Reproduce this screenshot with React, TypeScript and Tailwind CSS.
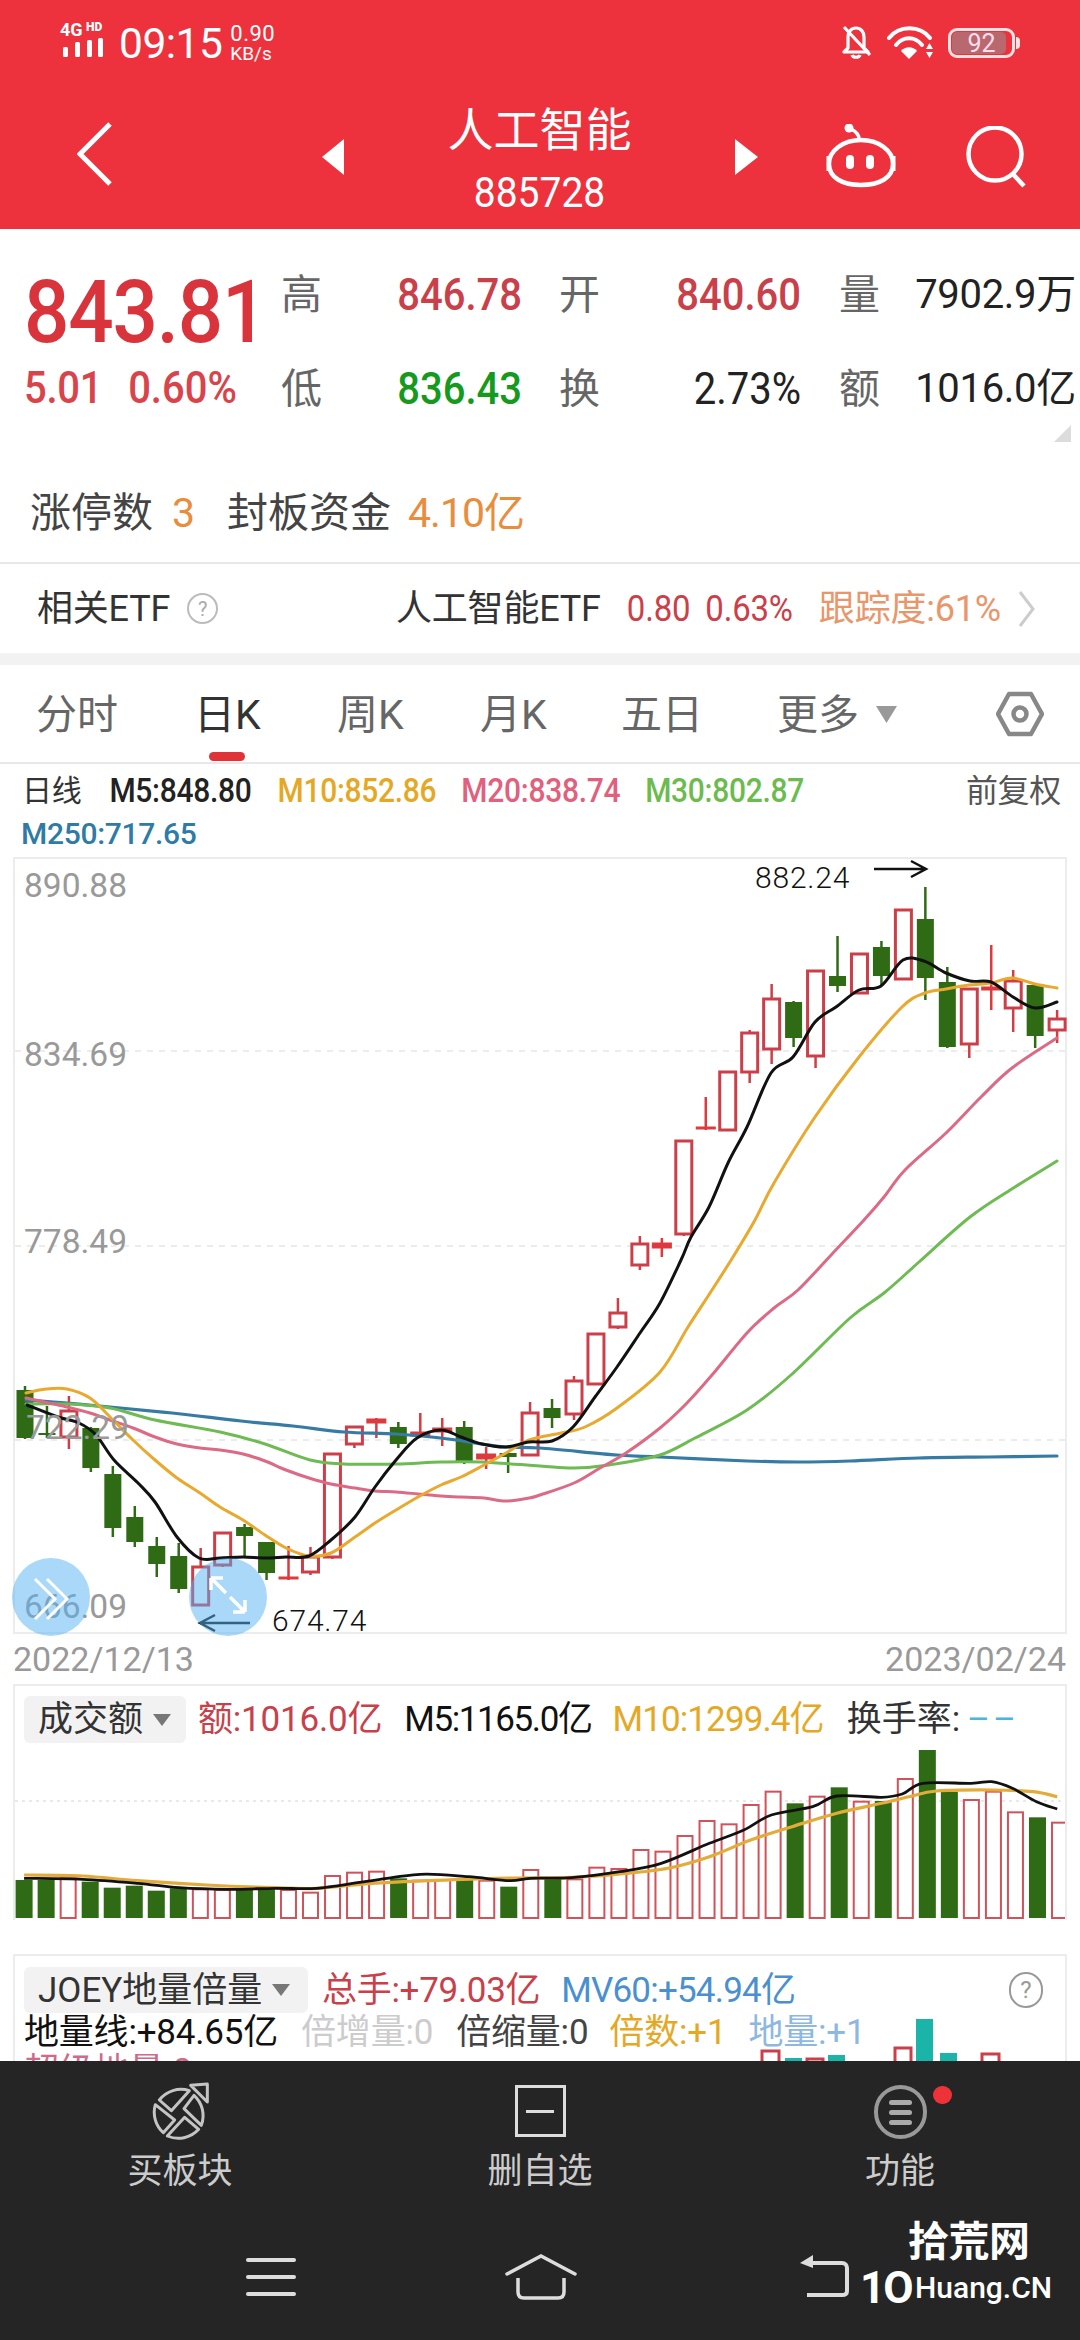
import React from "react";

type C = [number, number, number, number, number];
// kind (0 green, 1 hollow red, 2 solid red), bodyTop, bodyBottom, wickTop, wickBottom
const candles: C[] = [
  [0,1390,1438,1386,1439],[0,1433,1435,1406,1438],[1,1411,1437,1396,1449],[0,1428,1468,1427,1472],
  [0,1474,1528,1466,1537],[0,1517,1542,1506,1547],[0,1546,1564,1537,1577],[0,1556,1589,1543,1593],
  [1,1567,1605,1548,1605],[1,1533,1565,1533,1567],[0,1527,1536,1524,1557],[0,1542,1573,1542,1580],
  [2,1577,1579,1546,1580],[1,1557,1572,1547,1575],[1,1454,1557,1453,1559],[1,1427,1444,1427,1448],
  [2,1419,1423,1418,1438],[0,1427,1444,1422,1448],[2,1432,1436,1413,1437],[2,1428,1432,1418,1446],
  [0,1427,1463,1421,1464],[2,1454,1459,1447,1469],[0,1453,1457,1452,1473],[1,1413,1455,1402,1456],
  [0,1408,1418,1399,1428],[1,1381,1414,1376,1420],[1,1334,1384,1334,1385],[1,1313,1327,1298,1329],
  [1,1244,1265,1236,1270],[2,1243,1248,1238,1257],[1,1141,1234,1141,1236],[2,1127,1129,1097,1130],
  [1,1072,1130,1072,1131],[1,1033,1072,1030,1083],[1,999,1049,984,1064],[0,1002,1038,1001,1047],
  [1,971,1056,971,1068],[0,976,986,936,992],[1,954,993,954,994],[0,947,976,941,985],
  [1,910,979,910,980],[0,919,978,887,1000],[0,982,1047,967,1048],[1,989,1044,989,1058],
  [2,987,990,945,1010],[1,981,1008,970,1032],[0,985,1036,985,1048],[1,1019,1030,1010,1043],
];

const m5 = "27,1405 58,1417 79,1423 96,1435 114,1460 138,1483 155,1502 177,1537 199,1558 220,1558 243,1557 265,1558 286,1557 309,1556 331,1540 355,1517 375,1487 396,1460 417,1438 441,1430 461,1437 482,1444 506,1447 529,1442 552,1441 573,1427 595,1397 617,1367 640,1333 660,1303 681,1260 691,1237 709,1207 728,1163 747,1127 771,1073 793,1057 815,1022 836,1007 859,990 881,986 903,960 924,961 946,973 970,981 991,982 1013,997 1035,1008 1057,1002";
const m10 = "26,1393 46,1389 67,1389 90,1398 110,1417 133,1440 155,1460 177,1478 200,1493 220,1507 243,1520 265,1535 286,1548 309,1556 331,1553 355,1537 375,1523 396,1510 418,1497 441,1485 461,1477 484,1465 506,1453 529,1440 561,1433 585,1427 617,1408 660,1372 688,1327 712,1290 733,1257 755,1220 774,1183 815,1117 859,1057 902,1007 925,993 946,989 969,985 991,983 1012,978 1035,984 1057,988";
const m20 = "26,1398 67,1407 90,1413 110,1420 133,1428 155,1437 177,1444 200,1448 220,1450 243,1454 265,1461 286,1470 309,1478 331,1484 355,1488 375,1491 396,1492 418,1494 441,1496 461,1497 484,1498 506,1501 529,1498 540,1495 574,1483 600,1468 626,1453 660,1428 685,1405 712,1375 747,1333 774,1308 798,1290 833,1253 864,1220 884,1197 905,1170 946,1133 981,1097 1012,1068 1057,1038";
const m30 = "26,1404 67,1404 110,1408 155,1420 220,1432 265,1444 310,1460 344,1464 396,1464 441,1462 482,1462 540,1466 574,1468 609,1465 660,1455 695,1438 747,1410 791,1375 850,1318 884,1293 919,1262 970,1217 1015,1187 1057,1161";
const m250 = "26,1400 67,1403 110,1407 172,1413 241,1421 293,1426 344,1432 396,1434 441,1438 482,1444 506,1447 540,1448 617,1455 660,1457 747,1461 798,1462 850,1461 919,1458 988,1457 1057,1456";

// Catmull-Rom smoothing of a point list into a cubic path
function smooth(pts: string) {
  const p = pts.split(" ").map((s) => s.split(",").map(Number));
  let d = `M${p[0][0]} ${p[0][1]}`;
  for (let i = 0; i < p.length - 1; i++) {
    const a = p[Math.max(0, i - 1)], b = p[i], c = p[i + 1], e = p[Math.min(p.length - 1, i + 2)];
    const c1x = b[0] + (c[0] - a[0]) / 6, c1y = b[1] + (c[1] - a[1]) / 6;
    const c2x = c[0] - (e[0] - b[0]) / 6, c2y = c[1] - (e[1] - b[1]) / 6;
    d += `C${c1x.toFixed(1)} ${c1y.toFixed(1)} ${c2x.toFixed(1)} ${c2y.toFixed(1)} ${c[0]} ${c[1]}`;
  }
  return d;
}

const vol: [number, number][] = [
  [0,720],[0,720],[1,715],[0,725],[0,743],[0,737],[0,752],[0,745],[1,748],[1,750],[0,745],[0,748],[1,750],[1,758],[1,708],[1,698],
  [1,695],[0,715],[1,722],[1,720],[0,720],[1,722],[0,740],[1,690],[0,715],[1,718],[1,683],[1,687],[1,630],[1,635],[1,588],[1,543],
  [1,553],[1,495],[1,455],[0,490],[1,470],[0,442],[1,485],[0,483],[1,417],[0,327],[0,455],[1,480],[1,455],[1,517],[0,532],[1,548],
];
const volBlack: [number, number][] = [[35,715],[120,718],[200,730],[260,743],[330,748],[400,745],[460,745],[530,725],[610,703],[680,710],[740,722],[770,715],[830,713],[900,695],[960,670],[1030,610],[1080,570],[1120,525],[1180,500],[1215,468],[1280,472],[1310,462],[1340,430],[1410,430],[1440,425],[1470,445],[1505,485],[1535,507]];
const volOrange: [number, number][] = [[35,705],[120,708],[200,722],[300,735],[400,743],[460,745],[540,730],[620,722],[720,715],[830,712],[900,702],[970,685],[1030,650],[1090,600],[1150,560],[1215,520],[1280,490],[1320,470],[1360,453],[1440,450],[1500,455],[1535,470]];
const vx = (x: number) => x / 1.452;
const vy = (y: number) => 1640 + y / 3;
const toPts = (a: [number, number][]) => a.map(([x, y]) => `${vx(x).toFixed(1)},${vy(y).toFixed(1)}`).join(" ");

const RED = "#cc3f49";
const GREEN = "#2f6b14";

function KChart() {
  return (
    <svg viewBox="15 859 1050 773" className="block w-full h-full overflow-visible">
      {[1051, 1246, 1440].map((y) => (
        <line key={y} x1="15" x2="1065" y1={y} y2={y} stroke="#e6e6e6" strokeWidth="1.5" strokeDasharray="6 6" />
      ))}
      {candles.map(([k, t, b, wt, wb], i) => {
        const x = 25 + 21.96 * i;
        const color = k === 0 ? GREEN : k === 1 ? RED : "#dc3a3e";
        return (
          <g key={i}>
            <line x1={x} x2={x} y1={wt} y2={wb} stroke={color} strokeWidth="2.5" />
            {k === 0 ? (
              <rect x={x - 8.5} y={t} width="17" height={b - t} fill={color} />
            ) : k === 1 ? (
              <rect x={x - 8} y={t} width="16" height={b - t} fill="#fff" stroke={color} strokeWidth="3" />
            ) : (
              <rect x={x - 9.5} y={t} width="19" height={b - t} fill={color} stroke={color} strokeWidth="1" />
            )}
          </g>
        );
      })}
      <g fill="none" strokeLinejoin="round" strokeLinecap="round">
        <path d={smooth(m250)} stroke="#367ba3" strokeWidth="3.2" />
        <path d={smooth(m30)} stroke="#6dbb52" strokeWidth="3" />
        <path d={smooth(m20)} stroke="#dd6a84" strokeWidth="3" />
        <path d={smooth(m10)} stroke="#e8a92e" strokeWidth="3" />
        <path d={smooth(m5)} stroke="#111" strokeWidth="3" />
      </g>
      <g fill="#999" fontSize="33.5" fontFamily="Roboto, sans-serif">
        <text x="24" y="897">890.88</text>
        <text x="24" y="1066">834.69</text>
        <text x="24" y="1253">778.49</text>
        <text x="26" y="1439">722.29</text>
        <text x="24" y="1618">666.09</text>
      </g>
      <g fill="#111" fontSize="30" fontFamily="Roboto, sans-serif" fontWeight="300">
        <text x="755" y="888" letterSpacing="0.8">882.24</text>
        <text x="272" y="1631" letterSpacing="0.8">674.74</text>
      </g>
      <g fill="none" stroke="#111" strokeWidth="2.5">
        <path d="M874 869H925M911 861L926 869L911 877" />
        <path d="M250 1623H200M215 1615L200 1623L215 1631" />
      </g>
    </svg>
  );
}

function VolChart() {
  return (
    <svg viewBox="15 1750 1050 170" className="block w-full h-[170px]">
      <line x1="15" x2="1065" y1="1801" y2="1801" stroke="#e2e2e2" strokeWidth="1.5" strokeDasharray="3 4" />
      {vol.map(([k, t], i) => {
        const x = vx(35) + 22.03 * i;
        const top = vy(t);
        return k === 0 ? (
          <rect key={i} x={x - 8.5} y={top} width="17" height={1918 - top} fill={GREEN} />
        ) : (
          <rect key={i} x={x - 7.5} y={top} width="15" height={1918 - top} fill="#fff" stroke="#d0525a" strokeWidth="2" />
        );
      })}
      <path d={smooth(toPts(volOrange))} fill="none" stroke="#e3ac3a" strokeWidth="3.2" />
      <path d={smooth(toPts(volBlack))} fill="none" stroke="#111" strokeWidth="2.8" />
    </svg>
  );
}

const Tri = () => (
  <svg width="18" height="12" viewBox="0 0 18 12" className="shrink-0"><path d="M0 0H18L9 12Z" fill="#777" /></svg>
);

export default function App() {
  return (
    <div className="relative w-[1080px] h-[2340px] overflow-hidden bg-white flex flex-col font-[Roboto,'Noto_Sans_CJK_SC',sans-serif] text-[#333]">
      {/* Header */}
      <header className="h-[229px] shrink-0 bg-[#ee323d] text-white flex flex-col">
        <div className="h-[110px] flex items-start pt-[22px] pl-[60px] pr-[60px]">
          <svg width="48" height="36" viewBox="0 0 48 36" className="shrink-0 overflow-visible">
            <text x="0" y="14" fontSize="18" fontWeight="700" fill="#fff" fontFamily="Roboto, sans-serif">4G</text>
            <text x="26" y="9" fontSize="12" fontWeight="900" fill="#fff" fontFamily="Roboto, sans-serif">HD</text>
            <g fill="#fff">
              <rect x="3" y="25" width="5" height="10" rx="1.5" /><rect x="15" y="20" width="5" height="15" rx="1.5" />
              <rect x="27" y="18" width="5" height="17" rx="1.5" /><rect x="38" y="16" width="5" height="19" rx="1.5" />
            </g>
          </svg>
          <span className="ml-[11px] text-[42.5px] leading-[44px] tracking-[-0.5px]">09:15</span>
          <div className="ml-[8px] flex flex-col text-[22px] leading-[20px] pt-[2px]">
            <span className="tracking-[0.5px]">0.90</span>
            <span className="text-[19px]">KB/s</span>
          </div>
          <div className="ml-auto flex items-start pt-[3px]">
            <svg width="30" height="34" viewBox="0 0 30 34" fill="none" stroke="#fff" strokeWidth="3.2" className="shrink-0">
              <path d="M7 23V12C7 7 10 3 15 3S23 7 23 12V23L27 27H3Z" strokeLinejoin="round" />
              <path d="M11 30C12 33 18 33 19 30" />
              <path d="M3 2L29 30" />
            </svg>
            <svg width="47" height="34" viewBox="0 0 47 34" className="ml-[16px] shrink-0">
              <g fill="none" stroke="#fff" strokeWidth="4" strokeLinecap="round">
                <path d="M2 13C12 0 33 0 43 13" /><path d="M9 20C16 11 28 11 35 20" />
              </g>
              <path d="M14 26C18 21 26 21 30 26L22 34Z" fill="#fff" />
              <path d="M39 24H46L42.5 18ZM39 27H46L42.5 33Z" fill="#fff" />
            </svg>
            <div className="ml-[14px] mt-[3px] flex items-center shrink-0">
              <div className="relative w-[67px] h-[30px] rounded-[9px] border-[3px] border-[#fbe3e3] overflow-hidden flex items-center justify-center">
                <div className="absolute left-[1px] top-[1px] bottom-[1px] w-[54px] rounded-[5px] bg-[#b9686e]" />
                <span className="relative text-[25px] leading-none text-[#fde]">92</span>
              </div>
              <div className="w-[4px] h-[12px] bg-[#fbe3e3] rounded-r-sm ml-[1px]" />
            </div>
          </div>
        </div>
        <div className="h-[119px] flex items-start pl-[77px]">
          <svg width="35" height="64" viewBox="0 0 35 64" className="mt-[12px] shrink-0" fill="none" stroke="#fff" strokeWidth="5">
            <path d="M33 2L3 32L33 62" />
          </svg>
          <svg width="22" height="36" viewBox="0 0 22 36" className="ml-[210px] mt-[29px] shrink-0"><path d="M22 0V36L0 18Z" fill="#fff" /></svg>
          <div className="w-[391px] flex flex-col items-center">
            <span className="text-[46px] leading-[46px] mt-[-3px]">人工智能</span>
            <span className="text-[39px] leading-[40px] mt-[20px] scale-y-[1.1]">885728</span>
          </div>
          <svg width="23" height="36" viewBox="0 0 23 36" className="mt-[29px] shrink-0"><path d="M0 0V36L23 18Z" fill="#fff" /></svg>
          <svg width="72" height="64" viewBox="0 0 72 64" className="ml-[67px] mt-[14px] shrink-0" fill="none" stroke="#fff" strokeWidth="4.5">
            <path d="M36 16C53 16 68 26 68 40C68 54 54 61 36 61C18 61 4 54 4 40C4 26 19 16 36 16Z" />
            <path d="M3 32V47M69 32V47" strokeWidth="3" />
            <path d="M34 15C34 10 30 7 26 5" strokeWidth="3.5" />
            <circle cx="24" cy="4" r="4.5" fill="#fff" stroke="none" />
            <rect x="21" y="31" width="8" height="14" rx="4" fill="#fff" stroke="none" />
            <rect x="41" y="31" width="8" height="14" rx="4" fill="#fff" stroke="none" />
          </svg>
          <svg width="62" height="62" viewBox="0 0 62 62" className="ml-[68px] mt-[16px] shrink-0" fill="none" stroke="#fff" strokeWidth="4.5">
            <circle cx="30" cy="28" r="26.5" /><path d="M47 47L59 60" />
          </svg>
        </div>
      </header>

      {/* Quote */}
      <section className="relative h-[236px] shrink-0 flex">
        <div className="w-[281px] shrink-0 pl-[24px] pt-[44px] flex flex-col">
          <span className="h-[80px] flex items-center text-[80px] leading-none font-medium text-[#d9333b] tracking-[-1.2px] scale-y-[1.08] origin-center">843.81</span>
          <div className="h-[72px] flex items-center text-[40px] text-[#d9434a] leading-none">
            <span className="font-medium tracking-[-0.3px] scale-y-[1.1]">5.01</span>
            <span className="ml-[26px] font-medium scale-y-[1.1]">0.60%</span>
          </div>
        </div>
        <div className="pt-[19px] grid grid-cols-[41px_200px_78px_201px_79px_196px] grid-rows-[94px_94px] items-center h-fit">
          <span className="text-[41px] leading-none text-[#666]">高</span>
          <span className="text-right text-[40px] leading-none font-medium text-[#c9404a] scale-y-[1.12]">846.78</span>
          <span className="text-right text-[41px] leading-none text-[#666]">开</span>
          <span className="text-right text-[40px] leading-none font-medium text-[#c9404a] scale-y-[1.12]">840.60</span>
          <span className="text-right text-[41px] leading-none text-[#666]">量</span>
          <span className="text-right text-[40px] leading-none text-[#222] tracking-[-0.3px]">7902.9万</span>
          <span className="text-[41px] leading-none text-[#666]">低</span>
          <span className="text-right text-[40px] leading-none font-medium text-[#159a1e] scale-y-[1.12]">836.43</span>
          <span className="text-right text-[41px] leading-none text-[#666]">换</span>
          <span className="text-right text-[40px] leading-none text-[#222] scale-y-[1.12]">2.73%</span>
          <span className="text-right text-[41px] leading-none text-[#666]">额</span>
          <span className="text-right text-[40px] leading-none text-[#222] tracking-[-0.3px]">1016.0亿</span>
        </div>
        <svg width="17" height="17" viewBox="0 0 17 17" className="absolute left-[1054px] top-[196px]"><path d="M17 0V17H0Z" fill="#dcdcdc" /></svg>
      </section>

      <section className="h-[99px] shrink-0 border-b-2 border-[#e8e8e8] flex items-center pl-[30px] text-[41px] leading-none text-[#444]">
        <span>涨停数</span>
        <span className="ml-[19px] text-[#e98c3c]">3</span>
        <span className="ml-[32px]">封板资金</span>
        <span className="ml-[17px] text-[#e98c3c] tracking-[-1px]">4.10亿</span>
      </section>

      <section className="h-[89px] shrink-0 flex items-center pl-[37px] pr-[44px] text-[36px] leading-none text-[#333] tracking-[-0.2px]">
        <span>相关ETF</span>
        <span className="ml-[17px] w-[31px] h-[31px] rounded-full border-2 border-[#bbb] text-[#aaa] text-[20px] flex items-center justify-center">?</span>
        <span className="ml-auto">人工智能ETF</span>
        <span className="ml-[26px] text-[#cc3f49] text-[33px] scale-y-[1.1]">0.80</span>
        <span className="ml-[15px] text-[#cc3f49] text-[33px] scale-y-[1.1]">0.63%</span>
        <span className="ml-[26px] text-[#e8966a]">跟踪度:61%</span>
        <svg width="18" height="38" viewBox="0 0 18 38" className="ml-[17px]" fill="none" stroke="#ccc" strokeWidth="3"><path d="M2 2L15 19L2 36" /></svg>
      </section>

      <div className="h-[12px] shrink-0 bg-[#f2f2f2]" />

      {/* Tabs */}
      <nav className="relative h-[99px] shrink-0 border-b-2 border-[#e8e8e8] flex items-center pl-[36px] pt-[4px] text-[41px] leading-none text-[#666]">
        <span className="w-[158px]">分时</span>
        <span className="w-[143px] text-[#333]">日K</span>
        <span className="w-[143px]">周K</span>
        <span className="w-[141px]">月K</span>
        <span className="w-[156px]">五日</span>
        <span>更多</span>
        <svg width="21" height="17" viewBox="0 0 21 17" className="ml-[17px] -mt-[2px]"><path d="M0 0H21L10.5 17Z" fill="#999" /></svg>
        <svg width="48" height="48" viewBox="0 0 48 48" className="ml-auto mr-[36px] -mt-[4px]" fill="none" stroke="#888" strokeWidth="4.5" strokeLinejoin="round">
          <path d="M13 4H35L46 24L35 44H13L2 24Z" /><circle cx="24" cy="24" r="6.5" />
        </svg>
        <div className="absolute left-[209px] bottom-[1px] w-[36px] h-[9px] rounded-full bg-[#e03338]" />
      </nav>

      {/* MA legend */}
      <section className="h-[93px] shrink-0 relative text-[30px] leading-none tracking-[-0.3px]">
        <div className="flex items-center h-[54px] pl-[22px] pr-[19px]">
          <span className="text-[#333]">日线</span>
          <span className="ml-[28px] text-[#222] font-medium scale-y-[1.08]">M5:848.80</span>
          <span className="ml-[26px] text-[#e5a825] font-medium scale-y-[1.08]">M10:852.86</span>
          <span className="ml-[25px] text-[#e0607e] font-medium scale-y-[1.08]">M20:838.74</span>
          <span className="ml-[25px] text-[#6cbb4e] font-medium scale-y-[1.08]">M30:802.87</span>
          <span className="ml-auto text-[32px] text-[#555]">前复权</span>
        </div>
        <div className="pl-[21px] text-[#2e7ba6] mt-[1px] font-medium">M250:717.65</div>
      </section>

      {/* K chart */}
      <section className="relative mx-[13px] h-[777px] shrink-0 border-2 border-[#ececec]">
        <KChart />
        <div className="absolute left-[-3px] top-[699px] w-[78px] h-[78px] rounded-full bg-[#54b1f2]/50 flex items-center justify-center">
          <svg width="48" height="48" viewBox="0 0 48 48" fill="none" stroke="#fff" strokeWidth="3">
            <path d="M8 6L28 26L8 46M20 6L40 26L20 46" />
          </svg>
        </div>
        <div className="absolute left-[174px] top-[699px] w-[78px] h-[78px] rounded-full bg-[#54b1f2]/50 flex items-center justify-center">
          <svg width="48" height="48" viewBox="0 0 48 48" fill="none" stroke="#fff" strokeWidth="3.5">
            <path d="M7 5L22 20M7 5V17M7 5H19M41 39L26 24M41 39V27M41 39H29" />
          </svg>
        </div>
      </section>

      <div className="h-[50px] shrink-0 flex items-center justify-between pl-[13px] pr-[14px] text-[34px] leading-none text-[#999]">
        <span>2022/12/13</span>
        <span>2023/02/24</span>
      </div>

      {/* Volume */}
      <section className="mx-[13px] h-[236px] shrink-0 border-x-2 border-t-2 border-[#ececec] flex flex-col">
        <div className="pt-[10px] pl-[9px] h-[64px] shrink-0 flex items-start text-[35px] leading-none">
          <div className="w-[162px] h-[47px] rounded-[6px] bg-[#f2f2f2] flex items-center pl-[14px] text-[#333]">
            成交额
            <span className="ml-[10px]"><Tri /></span>
          </div>
          <div className="h-[47px] flex items-center">
            <span className="ml-[12px] text-[#c8404a] tracking-[-0.2px]">额:1016.0亿</span>
            <span className="ml-[22px] text-[#111] tracking-[-1.4px]">M5:1165.0亿</span>
            <span className="ml-[21px] text-[#e5a825] tracking-[-0.9px]">M10:1299.4亿</span>
            <span className="ml-[23px] text-[#333]">换手率:</span>
            <span className="ml-[7px] text-[#4bb5dc] tracking-[3px]">––</span>
          </div>
        </div>
        <VolChart />
      </section>

      <div className="h-[34px] shrink-0" />

      {/* JOEY */}
      <section className="relative mx-[13px] h-[107px] shrink-0 overflow-hidden border-x-2 border-t-2 border-[#ececec] text-[35px] leading-none">
        <div className="pt-[11px] pl-[9px] flex items-start">
          <div className="w-[284px] h-[46px] rounded-[6px] bg-[#f2f2f2] flex items-center pl-[14px] text-[#333]">
            JOEY地量倍量
            <span className="ml-[10px]"><Tri /></span>
          </div>
          <div className="h-[46px] flex items-center">
            <span className="ml-[14px] text-[#c8404a] tracking-[-0.3px]">总手:+79.03亿</span>
            <span className="ml-[21px] text-[#4a90d0] tracking-[-0.8px]">MV60:+54.94亿</span>
          </div>
          <div className="ml-auto mr-[22px] mt-[5px] w-[34px] h-[36px] rounded-full border-2 border-[#999] text-[#999] text-[24px] flex items-center justify-center">?</div>
        </div>
        <div className="pl-[9px] h-[40px] mt-[-1px] flex items-center tracking-[-0.2px]">
          <span className="text-[#111]">地量线:+84.65亿</span>
          <span className="ml-[23px] text-[#ccc]">倍增量:0</span>
          <span className="ml-[23px] text-[#444]">倍缩量:0</span>
          <span className="ml-[21px] text-[#e5a825]">倍数:+1</span>
          <span className="ml-[22px] text-[#8db8e0]">地量:+1</span>
        </div>
        <div className="pl-[9px] mt-[2px] text-[#d06a8a]">超级地量:0</div>
        <svg viewBox="15 2019 1050 42" className="absolute left-0 bottom-0 w-full h-[42px]">
          <rect x="762" y="2051" width="17" height="12" fill="#fff" stroke="#cc3f49" strokeWidth="3" />
          <rect x="785" y="2058" width="17" height="4" fill="#1ab5a8" />
          <rect x="807" y="2059" width="16" height="4" fill="#fff" stroke="#cc3f49" strokeWidth="3" />
          <rect x="828" y="2055" width="17" height="7" fill="#1ab5a8" />
          <rect x="895" y="2048" width="16" height="15" fill="#fff" stroke="#cc3f49" strokeWidth="3" />
          <rect x="916" y="2019" width="17" height="43" fill="#1ab5a8" />
          <rect x="940" y="2053" width="17" height="9" fill="#1ab5a8" />
          <rect x="982" y="2054" width="17" height="10" fill="#fff" stroke="#cc3f49" strokeWidth="3" />
        </svg>
      </section>

      {/* Bottom bar */}
      <footer className="relative flex-1 bg-[#252525] flex flex-col">
        <div className="h-[135px] pt-[24px] grid grid-cols-3 text-[35px] leading-none text-[#ccc]">
          <div className="flex flex-col items-center">
            <svg width="100" height="90" viewBox="0 0 300 270" fill="none" stroke="#c4c4c4" strokeWidth="9" strokeLinejoin="round" className="-mt-[15px] shrink-0">
              <path d="M88 90A82 82 0 0 1 178 62L124 122Z" />
              <path d="M192 76A82 82 0 0 1 214 166L162 116Z" />
              <path d="M206 178A82 82 0 0 1 112 198L164 142Z" />
              <path d="M100 188A82 82 0 0 1 76 104L134 150Z" />
              <path d="M182 46L232 42V96Z" />
            </svg>
            <span className="-mt-[6px]">买板块</span>
          </div>
          <div className="flex flex-col items-center">
            <div className="w-[51px] h-[52px] border-[3px] border-[#ddd] flex items-center justify-center">
              <div className="w-[28px] h-[3px] bg-[#ddd]" />
            </div>
            <span className="mt-[17px]">删自选</span>
          </div>
          <div className="relative flex flex-col items-center">
            <div className="w-[53px] h-[54px] rounded-full border-[4px] border-[#999] flex flex-col items-center justify-center gap-[5px]">
              <div className="w-[23px] h-[5px] rounded-sm bg-[#aaa]" />
              <div className="w-[23px] h-[5px] rounded-sm bg-[#aaa]" />
              <div className="w-[23px] h-[5px] rounded-sm bg-[#aaa]" />
            </div>
            <div className="absolute left-[213px] top-[1px] w-[19px] h-[18px] rounded-full bg-[#ee3338]" />
            <span className="mt-[15px]">功能</span>
          </div>
        </div>
        <div className="flex-1 relative">
          <div className="absolute left-[246px] top-[62px] w-[50px] flex flex-col gap-[13px]">
            <div className="h-[4px] rounded-full bg-[#ddd]" /><div className="h-[4px] rounded-full bg-[#ddd]" /><div className="h-[4px] rounded-full bg-[#ddd]" />
          </div>
          <svg width="72" height="46" viewBox="0 0 72 46" className="absolute left-[505px] top-[58px]" fill="none" stroke="#ddd" strokeWidth="3.5">
            <path d="M2 20L36 2L70 20" strokeLinecap="round" />
            <path d="M13 24V38C13 42 15 44 19 44H53C57 44 59 42 59 38V24" />
          </svg>
          <svg width="52" height="44" viewBox="0 0 52 44" className="absolute left-[798px] top-[58px]" fill="none" stroke="#ddd" strokeWidth="4">
            <path d="M10 9H44C47 9 49 11 49 14V37C49 40 47 41 44 41H9" />
            <path d="M15 1L2 9L15 14Z" fill="#ddd" stroke="none" />
          </svg>
          <div className="absolute left-[908px] top-[26px] text-[41px] leading-none font-bold text-white tracking-[-0.5px]">拾荒网</div>
          <div className="absolute left-[860px] top-[70px] w-[200px] flex items-center text-white leading-none">
            <span className="w-[50px] text-[44px] font-bold tracking-[-2px]">1O</span>
            <span className="ml-[5px] text-[30px] font-medium">Huang.CN</span>
          </div>
        </div>
      </footer>
    </div>
  );
}
